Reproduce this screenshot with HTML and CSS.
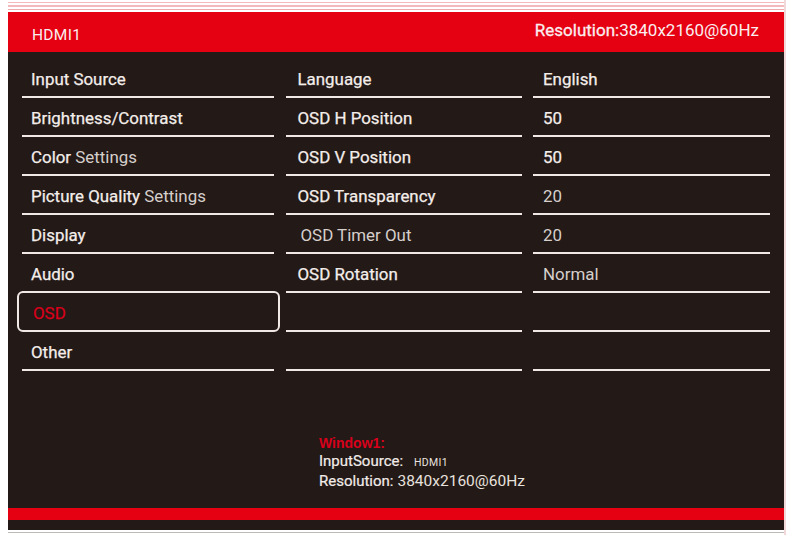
FILE: index.html
```html
<!DOCTYPE html>
<html lang="en">
<head>
<meta charset="utf-8">
<title>OSD Menu</title>
<link rel="stylesheet" href="styles.css">
</head>
<body>
<div class="frame">
  <div class="stripes"></div>
  <header class="topbar">
    <span class="source">HDMI1</span>
    <span class="res"><span class="res-label">Resolution:</span>3840x2160@60Hz</span>
  </header>
  <main class="panel">
    <div class="menu">
      <div class="col col-main">
        <div class="row"><span class="t">Input Source</span></div>
        <div class="row"><span class="t">Brightness/Contrast</span></div>
        <div class="row"><span class="t">Color</span><span class="light">&nbsp;Settings</span></div>
        <div class="row"><span class="t">Picture Quality</span><span class="light">&nbsp;Settings</span></div>
        <div class="row"><span class="t">Display</span></div>
        <div class="row"><span class="t">Audio</span></div>
        <div class="row row-active"><span class="t red">OSD</span></div>
        <div class="row"><span class="t">Other</span></div>
      </div>
      <div class="col col-sub">
        <div class="row"><span class="t">Language</span></div>
        <div class="row"><span class="t">OSD H Position</span></div>
        <div class="row"><span class="t">OSD V Position</span></div>
        <div class="row"><span class="t">OSD Transparency</span></div>
        <div class="row"><span class="light indent">OSD Timer Out</span></div>
        <div class="row"><span class="t">OSD Rotation</span></div>
        <div class="row"></div>
        <div class="row"></div>
      </div>
      <div class="col col-val">
        <div class="row"><span class="t">English</span></div>
        <div class="row"><span class="t">50</span></div>
        <div class="row"><span class="t">50</span></div>
        <div class="row"><span class="light">20</span></div>
        <div class="row"><span class="light">20</span></div>
        <div class="row"><span class="light">Normal</span></div>
        <div class="row"></div>
        <div class="row"></div>
      </div>
    </div>
    <div class="info">
      <div class="info-title">Window1:</div>
      <div class="info-line"><span class="info-label">InputSource:</span><span class="info-small">HDMI1</span></div>
      <div class="info-line"><span class="info-label">Resolution:</span><span class="info-val">3840x2160@60Hz</span></div>
    </div>
  </main>
  <div class="redband"></div>
  <div class="darkband"></div>
  <div class="baseline"></div>
</div>
</body>
</html>
```

FILE: styles.css
```css
html, body {
  margin: 0;
  padding: 0;
  background: #ffffff;
}

body {
  font-family: Roboto, "Liberation Sans", Arial, sans-serif;
  color: #f2ece9;
}

.frame {
  margin-left: 8px;
  width: 776px;
  border-right: 2px solid #f1d9da;
}

.stripes {
  height: 12px;
  background:
    linear-gradient(#ffffff 0 2px, #f3b9bc 2px 3px, #ffffff 3px 5px, #f3b9bc 5px 7px, #ffffff 7px 9px, #f0a9ad 9px 10px, #ffffff 10px 12px);
}

.topbar {
  height: 40px;
  background: #e50012;
  display: flex;
  align-items: center;
  justify-content: space-between;
  padding: 1px 25px 0 24px;
  box-sizing: border-box;
}

.source {
  font-size: 15.5px;
  font-weight: 400;
  letter-spacing: 0.3px;
  color: #fbeeee;
  padding-top: 4px;
}

.res {
  font-size: 17px;
  font-weight: 400;
  color: #fbeeee;
  margin-top: -5px;
}

.res-label {
  font-size: 17px;
  -webkit-text-stroke: 0.3px currentColor;
}

.panel {
  background: #231916;
  height: 456px;
  padding: 7px 14px 0 14px;
  box-sizing: border-box;
}

.menu {
  display: grid;
  grid-template-columns: 252px 236px 237px;
  column-gap: 11.5px;
}

.row {
  height: 39px;
  box-sizing: border-box;
  border-bottom: 2px solid #efe8e5;
  display: flex;
  align-items: center;
  padding-top: 3px;
  font-size: 16.9px;
  white-space: nowrap;
}

.col-main .row { padding-left: 9px; }
.col-sub .row { padding-left: 12px; }
.col-val .row { padding-left: 10px; }

.t {
  font-weight: 400;
  color: #f4eeeb;
  -webkit-text-stroke: 0.25px currentColor;
}

.light {
  font-weight: 400;
  color: #d6cfcc;
}

.indent {
  padding-left: 3px;
}

.red {
  color: #d9001b;
}

.row-active {
  height: 41px;
  margin: -2px -6px 0 -5px;
  padding-left: 14px !important;
  border: 2px solid #efe8e5;
  border-radius: 6px;
}

.info {
  margin: 63px 0 0 297px;
  line-height: 18px;
}

.info-title {
  font-family: "Liberation Sans", Arial, sans-serif;
  font-weight: 700;
  font-size: 14px;
  color: #d9001b;
}

.info-line {
  display: flex;
  align-items: baseline;
}

.info-label {
  font-size: 15px;
  font-weight: 400;
  color: #f2ece9;
  -webkit-text-stroke: 0.2px currentColor;
}

.info-small {
  font-size: 10.5px;
  margin-left: 11px;
  letter-spacing: 0.3px;
  color: #e8e2df;
}

.info-val {
  font-size: 15.5px;
  margin-left: 4px;
  color: #e8e2df;
}

.redband {
  height: 12px;
  background: #e50012;
}

.darkband {
  height: 10px;
  background: #231916;
}

.baseline {
  height: 5px;
  background: linear-gradient(#ffffff 0 2px, #bdb9b8 2px 3px, #ffffff 3px 5px);
}
```
